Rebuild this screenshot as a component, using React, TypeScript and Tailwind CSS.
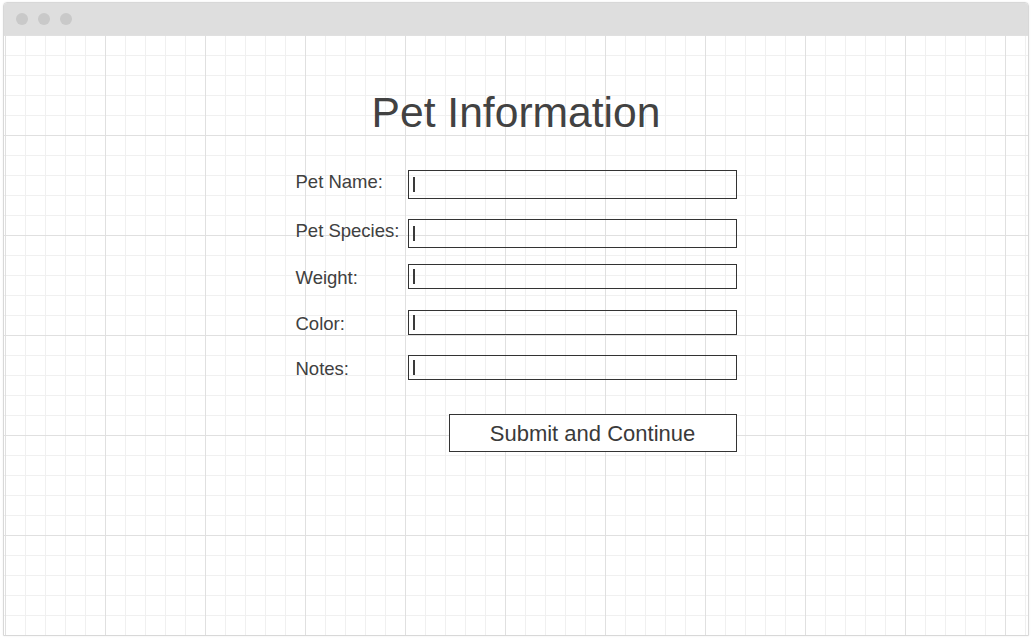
const fields = [
  { label: 'Pet Name:', box: 'h-[29px]', gap: 'mb-[20px]', pad: 'pt-[1px]' },
  { label: 'Pet Species:', box: 'h-[29px]', gap: 'mb-[16px]', pad: 'pt-[1px]' },
  { label: 'Weight:', box: 'h-[25px]', gap: 'mb-[21px]', pad: 'pt-[3px]' },
  { label: 'Color:', box: 'h-[25px]', gap: 'mb-[20px]', pad: 'pt-[3px]' },
  { label: 'Notes:', box: 'h-[25px]', gap: 'mb-0', pad: 'pt-[3px]' },
]

const App = () => {
  return (
    <div className="w-[1032px] h-[638px] bg-white pl-[3px] pt-[2px] font-['Liberation_Sans',Arial,sans-serif] text-[#404040]">
      <div className="w-[1026px] h-[634px] flex flex-col border border-[#d8d8d8] rounded-t-[4px] overflow-hidden shadow-[0_0_2px_rgba(0,0,0,0.08)]">
        {/* title bar */}
        <div className="h-[32px] shrink-0 bg-[#dedede] flex items-center gap-[10px] pl-[12px]">
          <span className="w-[12px] h-[12px] rounded-full bg-[#c9c9c9]" />
          <span className="w-[12px] h-[12px] rounded-full bg-[#c9c9c9]" />
          <span className="w-[12px] h-[12px] rounded-full bg-[#c9c9c9]" />
        </div>

        {/* grid canvas */}
        <div className="flex-1 flex flex-col items-center pt-[53px] bg-white bg-[linear-gradient(to_right,#e0e0e0_1px,transparent_1px),linear-gradient(to_bottom,#e0e0e0_1px,transparent_1px),linear-gradient(to_right,#f0f0f0_1px,transparent_1px),linear-gradient(to_bottom,#f0f0f0_1px,transparent_1px)] [background-size:100px_100px,100px_100px,20px_20px,20px_20px] [background-position:1px_0px,1px_0px,1px_0px,1px_0px]">
          <h1 className="text-[42.6px] leading-[48px] text-[#424242]">Pet Information</h1>

          <div className="w-[441px] mt-[34px] flex flex-col">
            {fields.map((f) => (
              <div key={f.label} className={`flex items-start ${f.gap}`}>
                <label className={`w-[112px] shrink-0 text-[18.5px] leading-[21px] ${f.pad}`}>{f.label}</label>
                <div className={`flex-1 ${f.box} border border-[#333] flex items-center pl-[4px]`}>
                  <span className="w-[2px] h-[15px] bg-[#3a3a3a]" />
                </div>
              </div>
            ))}

            <div className="flex justify-end mt-[34px]">
              <button className="w-[288px] h-[38px] border border-[#333] bg-white text-[22px] leading-none text-[#3a3a3a] pt-[1px]">
                Submit and Continue
              </button>
            </div>
          </div>
        </div>
      </div>
    </div>
  )
}

export default App
